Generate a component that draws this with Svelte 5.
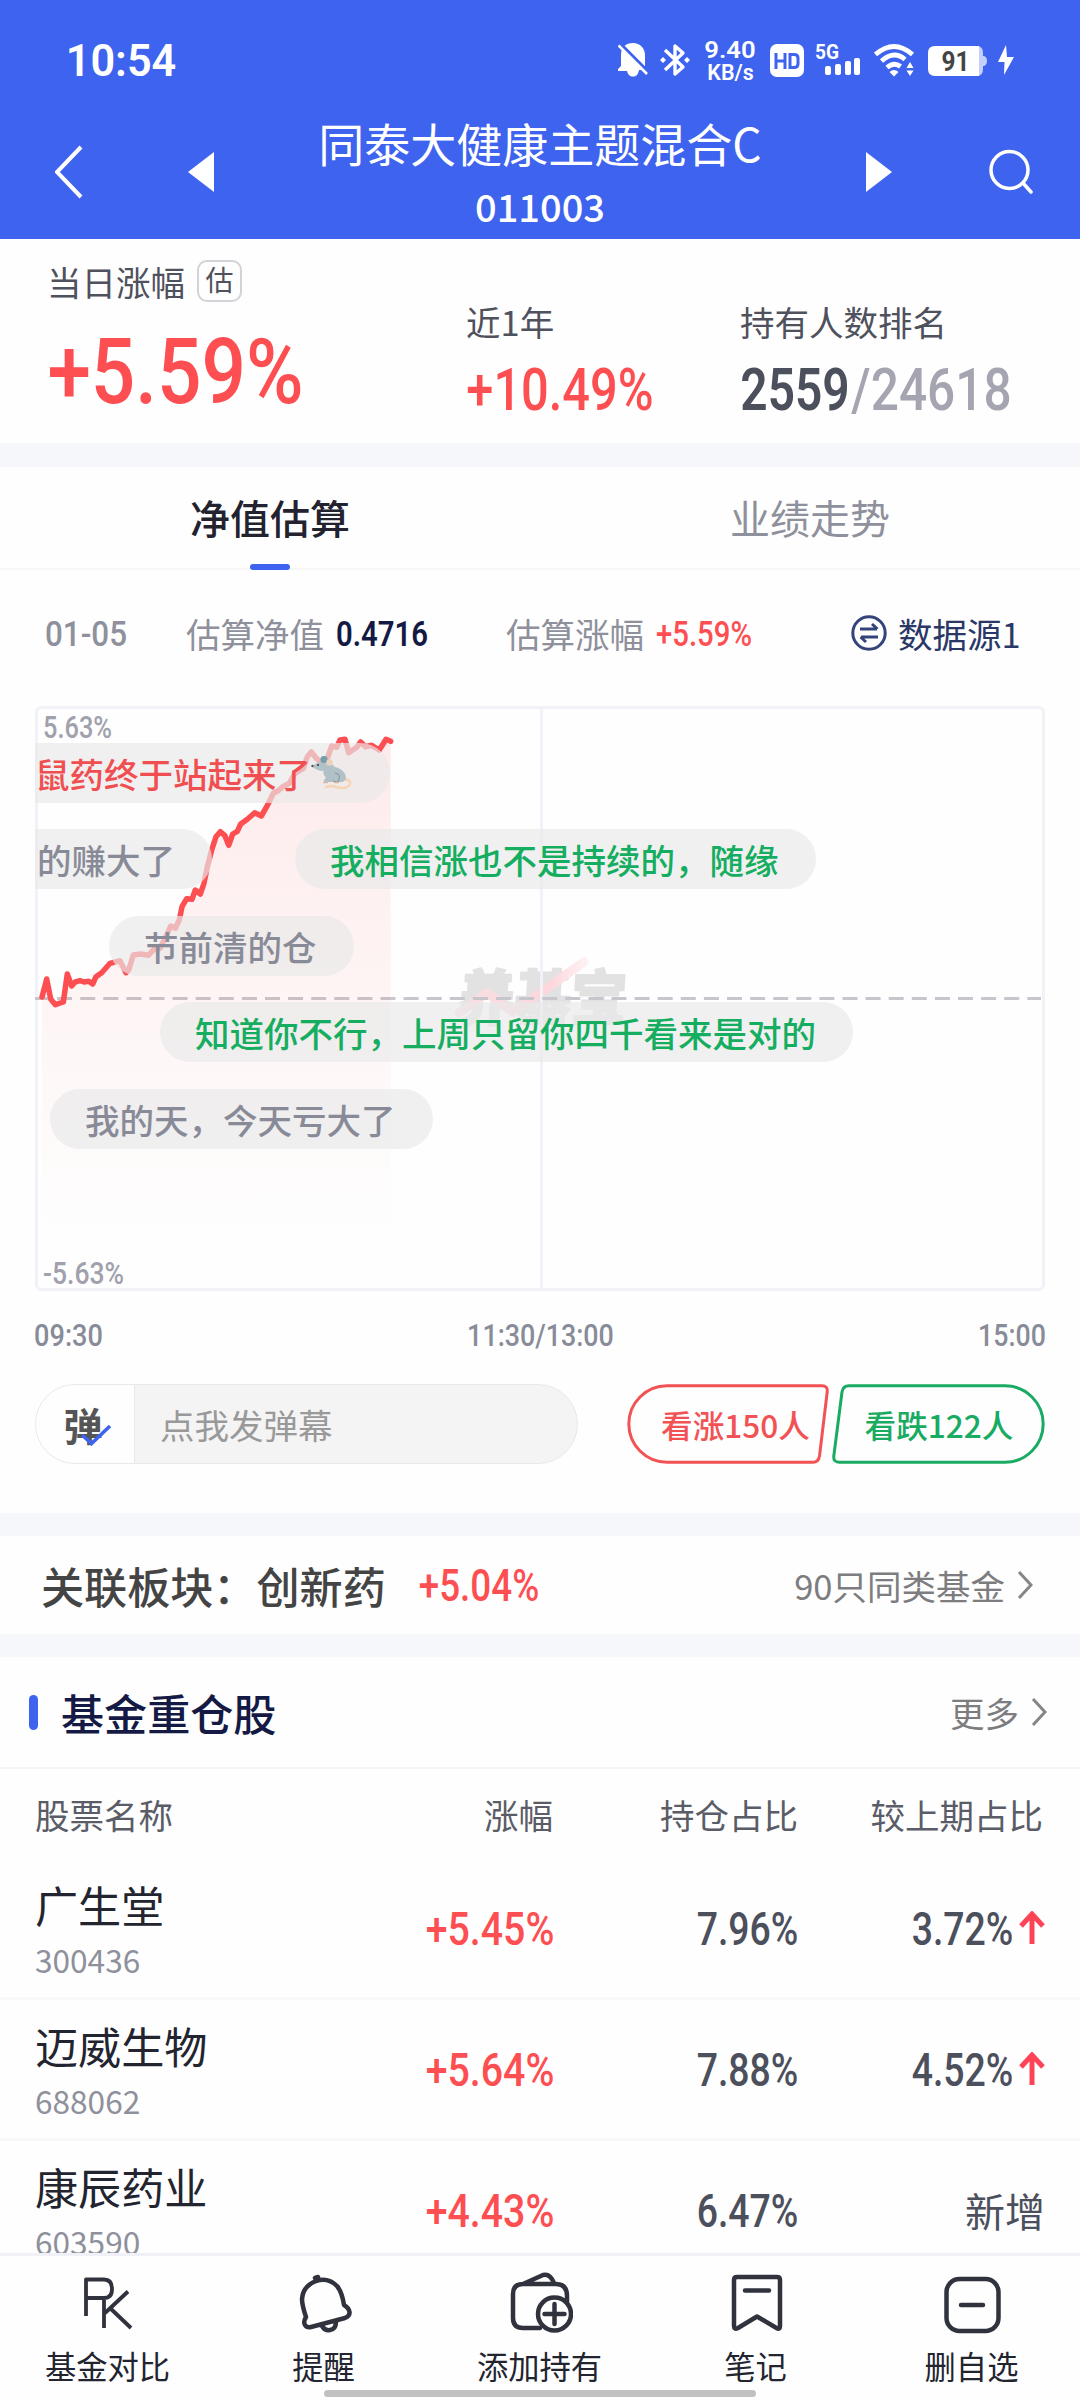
<script lang="ts">
    type Comment = { text: string; tone: 'up' | 'down' | 'flat'; left: number; top: number; mouse?: boolean };

    const comments: Comment[] = [
        { text: '鼠药终于站起来了', tone: 'up', left: -35, top: 37, mouse: true },
        { text: '的赚大了', tone: 'flat', left: -33, top: 123 },
        { text: '我相信涨也不是持续的，随缘', tone: 'down', left: 260, top: 123 },
        { text: '节前清的仓', tone: 'flat', left: 74, top: 210 },
        { text: '知道你不行，上周只留你四千看来是对的', tone: 'down', left: 125, top: 296 },
        { text: '我的天，今天亏大了', tone: 'flat', left: 15, top: 383 },
    ];

    const stocks = [
        { name: '广生堂', code: '300436', change: '+5.45%', share: '7.96%', diff: '3.72%' },
        { name: '迈威生物', code: '688062', change: '+5.64%', share: '7.88%', diff: '4.52%' },
        { name: '康辰药业', code: '603590', change: '+4.43%', share: '6.47%', diff: '' },
    ];

    const line = '7,291 11.7,273 15.7,293 20.3,298.7 28.3,296 32.3,268 36.7,280 40.3,276 45,274.7 49,276 53.7,275.3 57.7,278 61,270.7 66.7,266.7 75,257.3 85,254.7 91,266.7 93.7,264 98.3,249 105.7,248 113.3,249.3 118.3,244 125,242.3 131.7,229 135.7,220 140.3,222.3 144.3,214 147,200.7 151.7,192.7 157,193.3 160.3,184 165.3,188 169,177.3 172.3,160.7 176.7,144 181,130.7 185.3,125.7 189.7,129.3 193.7,139.3 197.7,128 202.3,125.3 205.7,118 212.3,113.3 219.7,106.7 226.3,110 231.7,100.7 238.3,87.3 243.3,84.7 247.7,80.7 254.3,77.3 260,67.3 268.3,62.3 272.3,50.7 276.3,46 281.7,52.7 290,59 296.7,40 301.7,41.3 305,34 310,33.3 313.7,46.7 321.7,41.3 325.7,36 330.3,40.7 336.7,39.3 344.3,44 351,33.3 355.7,35.3';

    let activeTab = $state('estimate');
    let danmakuOn = $state(true);
</script>

<!-- Condensed figures: w is the drawn width, h the height of the digits -->
{#snippet num(text: string, w: number, h: number, weight = 500)}
    <svg class="num" width={w} height={h} viewBox="0 0 {w} {h}">
        <text x={-h * 0.04} y={h} font-size={h / 0.711} font-weight={weight} textLength={w + h * 0.08} lengthAdjust="spacingAndGlyphs">{text}</text>
    </svg>
{/snippet}

{#snippet chevron()}
    <svg class="chevron" width="16" height="28" viewBox="0 0 16 28"><path d="M2 1 14 14 2 27" /></svg>
{/snippet}

<div class="app">
    <header>
        <div class="status">
            <span class="time">{@render num('10:54', 108, 31, 600)}</span>
            <div class="status-icons">
                <svg class="bell" width="30" height="34" viewBox="0 0 30 34">
                    <path fill="#fff" d="M3 12 C3 4 8 0 15 0 C22 0 27 5 27 12 V27 H21 C20 32 18 33.500 15 33.500 C12 33.500 10 32 9 28 H0 V26 L3 23Z" />
                    <path class="slash" d="M1 0 31 30" />
                    <path stroke="#fff" stroke-width="2.600" d="M0.500 2.500 29 31" />
                </svg>
                <svg class="bt" width="30" height="34" viewBox="0 0 30 34" fill="none" stroke="#fff" stroke-width="3.400">
                    <path d="M5 7 23 24 15 31 V3 L23 10 5 27" stroke-linejoin="round" />
                    <path d="M0 17 3 14 6 17 3 20Z M24 17 27 14 30 17 27 20Z" fill="#fff" stroke="none" />
                </svg>
                <div class="speed">
                    {@render num('9.40', 50, 17, 600)}
                    {@render num('KB/s', 45, 16, 600)}
                </div>
                <svg class="hd" width="34" height="33" viewBox="0 0 34 33">
                    <rect width="34" height="33" rx="7" fill="#fff" />
                    <path d="M6 9 V25 M15 9 V25 M6 17 H15 M20 10.500 H24 Q28 10.500 28 14 V20 Q28 23.500 24 23.500 H20Z" fill="none" stroke="#3e63ee" stroke-width="3" />
                </svg>
                <svg class="signal" width="46" height="33" viewBox="0 0 46 33">
                    <text x="0" y="15" font-size="20" font-weight="700" textLength="24" lengthAdjust="spacingAndGlyphs">5G</text>
                    <rect x="10" y="22" width="6" height="9" rx="2" />
                    <rect x="20" y="20" width="6" height="11" rx="2" />
                    <rect x="30" y="17" width="6" height="14" rx="2" />
                    <rect x="39" y="14" width="6" height="17" rx="2" />
                </svg>
                <svg class="wifi" width="41" height="33" viewBox="0 0 41 33">
                    <path d="M1.500 10.500 Q20 -5.500 38.500 10.500 M7.500 17 Q20 6 31 15.500 M13 23.500 Q20 17.500 26.500 22.500" fill="none" stroke="#fff" stroke-width="4.800" />
                    <path fill="#fff" d="M15.500 28 Q20 24 24.500 28 L20 32.500Z M32.500 24 36 18 39.500 24Z M32.500 26.500 H39.500 L36 32Z" />
                </svg>
                <svg class="battery" width="60" height="30" viewBox="0 0 60 30">
                    <path fill="#c5d0fa" d="M46 0 H49 Q55 0 55 7 V10 H56 Q59 11 59 15 Q59 19 56 20 H55 V23 Q55 30 49 30 H46Z" />
                    <path fill="#fff" d="M7 0 H51 V30 H7 Q0 30 0 23 V7 Q0 0 7 0Z" />
                    <text x="13.500" y="25" font-size="27.500" font-weight="700" textLength="28" lengthAdjust="spacingAndGlyphs">91</text>
                </svg>
                <svg class="bolt" width="16" height="30" viewBox="0 0 16 30"><path fill="#fff" d="M8 0 0 17 H6.500 L6 30 16 12 H9Z" /></svg>
            </div>
        </div>
        <nav class="top">
            <svg class="back" width="28" height="54" viewBox="0 0 28 54"><path d="M26 2 2 27 26 52" fill="none" stroke="#fff" stroke-width="4" /></svg>
            <svg class="prev" width="26" height="40" viewBox="0 0 26 40"><path d="M26 0 V40 L0 20Z" fill="#fff" /></svg>
            <div class="fund">
                <h1>同泰大健康主题混合C</h1>
                <p>011003</p>
            </div>
            <svg class="next" width="26" height="40" viewBox="0 0 26 40"><path d="M0 0 V40 L26 20Z" fill="#fff" /></svg>
            <svg class="search" width="44" height="46" viewBox="0 0 44 46" fill="none" stroke="#fff" stroke-width="3.500">
                <circle cx="20.500" cy="21" r="18.500" />
                <path d="M34 34 42 43" stroke-linecap="round" />
            </svg>
        </nav>
    </header>

    <main>
        <section class="summary">
            <div class="today">
                <div class="label">当日涨幅 <span class="badge">估</span></div>
                <span class="up">{@render num('+5.59%', 251, 65, 500)}</span>
            </div>
            <div class="stat year">
                <div class="label">近1年</div>
                <span class="up">{@render num('+10.49%', 184, 42)}</span>
            </div>
            <div class="stat">
                <div class="label">持有人数排名</div>
                <div class="rank">
                    <span class="dark">{@render num('2559', 106, 42, 600)}</span>
                    <span class="soft">{@render num('/24618', 157, 42)}</span>
                </div>
            </div>
        </section>

        <div class="tabs">
            <button class="tab" class:selected={activeTab === 'estimate'} onclick={() => (activeTab = 'estimate')}>净值估算</button>
            <button class="tab" class:selected={activeTab === 'trend'} onclick={() => (activeTab = 'trend')}>业绩走势</button>
        </div>

        <section class="estimate">
            <div class="info">
                <span class="muted">{@render num('01-05', 80, 25)}</span>
                <span class="pair value">估算净值 <span class="navy">{@render num('0.4716', 90, 25, 600)}</span></span>
                <span class="pair">估算涨幅 <span class="up">{@render num('+5.59%', 94, 25)}</span></span>
                <span class="source">
                    <svg width="36" height="36" viewBox="0 0 36 36" fill="none" stroke="#34447a" stroke-width="3">
                        <circle cx="18" cy="18" r="16.200" />
                        <path d="M9 14 H26 M21 9 26.500 14 M27 22 H10 M15 27 9.500 22" />
                    </svg>
                    数据源1
                </span>
            </div>

            <div class="chart">
                <svg width="1010" height="585" viewBox="0 0 1010 585">
                    <defs>
                        <linearGradient id="fade" x1="0" y1="35" x2="0" y2="530" gradientUnits="userSpaceOnUse">
                            <stop offset="0" stop-color="#fd4e52" stop-opacity="0.11" />
                            <stop offset="1" stop-color="#fd4e52" stop-opacity="0" />
                        </linearGradient>
                        <linearGradient id="pink" x1="423" y1="0" x2="555" y2="0" gradientUnits="userSpaceOnUse">
                            <stop offset="0" stop-color="#f9dfe2" />
                            <stop offset="0.7" stop-color="#fcd7dc" />
                            <stop offset="1" stop-color="#fef4f5" />
                        </linearGradient>
                    </defs>
                    <g transform="translate(423 314) skewX(-3)">
                        <text class="watermark" x="0" y="0" textLength="168" lengthAdjust="spacingAndGlyphs">养基宝</text>
                    </g>
                    <path class="swoosh" stroke="url(#pink)" d="M424 307 452 287 478 306 549 256" />
                    <rect class="frame" x="1.500" y="1.500" width="1007" height="582" rx="5" />
                    <path class="frame" d="M506.500 2 V583" />
                    <g class="axis">
                        <text x="8" y="32" textLength="69" lengthAdjust="spacingAndGlyphs">5.63%</text>
                        <text x="8" y="578" textLength="81" lengthAdjust="spacingAndGlyphs">-5.63%</text>
                    </g>
                    <path class="zero" d="M-1 292.500 H1006" />
                    <polygon points="7,585 {line} 355.7,585" fill="url(#fade)" />
                    <polyline class="trend" points={line} />
                </svg>
                <div class="danmaku">
                    {#each comments as c}
                        <div class="pill {c.tone}" style="left: {c.left}px; top: {c.top}px">
                            {c.text}
                            {#if c.mouse}
                                <svg class="mouse" width="42" height="34" viewBox="0 0 42 34">
                                    <path d="M29 24 Q40 22 39 28 Q36 34 25 31 Q20 29 15 31" fill="none" stroke="#f6d5b4" stroke-width="2.500" stroke-linecap="round" />
                                    <path d="M1 10 Q9 4 17 5 Q21 8 24 11 C31 13 35 17 35 22 Q34 27 27 26 L14 26 Q11 25 15 22 Q11 18 13 15 Q5 15 1 10Z" fill="#b2c0c8" />
                                    <path d="M24 17 Q31 18 27 26 L22 25" fill="none" stroke="#8195a0" />
                                    <circle cx="13" cy="3.500" r="3.600" fill="#769fac" />
                                    <circle cx="18.500" cy="6.500" r="3.200" fill="#ead3bd" />
                                    <circle cx="7" cy="9" r="1" fill="#333" />
                                    <circle cx="1.500" cy="10" r="1.200" fill="#555" />
                                    <path d="M12 26.500 H17 M23 26.500 H28" stroke="#dfb99d" stroke-width="1.500" />
                                </svg>
                            {/if}
                        </div>
                    {/each}
                </div>
            </div>

            <div class="times">
                {@render num('09:30', 67, 22)}
                {@render num('11:30/13:00', 145, 22)}
                {@render num('15:00', 66, 22)}
            </div>

            <div class="actions">
                <div class="composer">
                    <button class="toggle" onclick={() => (danmakuOn = !danmakuOn)}>
                        弹
                        {#if danmakuOn}
                            <svg width="32" height="22" viewBox="0 0 32 22"><path d="M2 11 11.500 19.500 30 2" /></svg>
                        {/if}
                    </button>
                    <span class="placeholder">点我发弹幕</span>
                </div>
                <button class="vote bull">
                    <svg width="202" height="80" viewBox="0 0 202 80"><path d="M40 1.800 H195 Q201 1.800 200.200 8 L192.500 72 Q191.500 78.200 186 78.200 H40 A38.200 38.200 0 0 1 40 1.800Z" /></svg>
                    看涨150人
                </button>
                <button class="vote bear">
                    <svg width="213" height="80" viewBox="0 0 213 80"><path d="M173 1.800 H17 Q11 1.800 10 8 L1.800 72 Q1.200 78.200 7 78.200 H173 A38.200 38.200 0 0 0 173 1.800Z" /></svg>
                    看跌122人
                </button>
            </div>
        </section>

        <section class="sector">
            <strong>关联板块：创新药</strong>
            <span class="up">{@render num('+5.04%', 118, 31)}</span>
            <span class="more">90只同类基金 {@render chevron()}</span>
        </section>

        <section class="holdings">
            <div class="heading">
                <i></i>
                <h2>基金重仓股</h2>
                <span class="more">更多 {@render chevron()}</span>
            </div>
            <div class="row head">
                <span>股票名称</span>
                <span>涨幅</span>
                <span>持仓占比</span>
                <span>较上期占比</span>
            </div>
            {#each stocks as s}
                <div class="row">
                    <div class="stock">
                        <b>{s.name}</b>
                        <small>{s.code}</small>
                    </div>
                    <span class="up">{@render num(s.change, 126, 33)}</span>
                    <span class="dark">{@render num(s.share, 99, 33)}</span>
                    <span class="dark diff">
                        {#if s.diff}
                            {@render num(s.diff, 99, 33)}
                            <svg class="arrow" width="26" height="34" viewBox="0 0 26 34"><path d="M13 33 V3 M2 15 13 3 24 15" /></svg>
                        {:else}
                            新增
                        {/if}
                    </span>
                </div>
            {/each}
        </section>
    </main>

    <footer>
        <div class="item">
            <svg width="60" height="62" viewBox="0 0 60 62">
                <path d="M8 44 V7.500 H26 Q34 7.500 34 17 Q34 26 26 26 H9 M26 27 V56 M50 19.500 27 41 M32 36 53 56" class="thin" />
            </svg>
            基金对比
        </div>
        <div class="item">
            <svg width="60" height="62" viewBox="0 0 60 62">
                <path d="M22 9 Q9 14 8 27 Q8 33 12 45 Q9 50 11 53 Q13 56 17 55 L51 46 Q56 44 55.500 40 Q55 36 50 33 Q48 20 43 14 Q34 5 22 9Z M22 8 21 6 24 5 M28 54 Q31 59 36 58 Q42 57 42 50" />
            </svg>
            提醒
        </div>
        <div class="item">
            <svg width="66" height="62" viewBox="0 0 66 62">
                <path d="M33 56 H16 Q6 56 6 46 V22 Q6 12 16 12 H49 Q60 12 60 24 V30 M16 12 36 3 Q43 1 47 11" />
                <circle cx="47.500" cy="42" r="16.500" />
                <path d="M47.500 32 V52 M37.500 42 H57.500" />
            </svg>
            添加持有
        </div>
        <div class="item">
            <svg width="60" height="62" viewBox="0 0 60 62">
                <path d="M11 5 H51 Q54 5 54 8 V54 Q54 58 50.500 56 L31 44.500 12 56 Q8 58 8 54 V8 Q8 5 11 5Z M19 18.500 H43" />
            </svg>
            笔记
        </div>
        <div class="item">
            <svg width="60" height="62" viewBox="0 0 60 62">
                <rect x="4.500" y="7" width="52" height="52" rx="13" />
                <path d="M19 33 H41" />
            </svg>
            删自选
        </div>
        <div class="home"></div>
    </footer>
</div>

<style>
    :global(body) {
        margin: 0;
        background: #fff;
    }

    .app {
        display: flex;
        flex-direction: column;
        width: 1080px;
        height: 2400px;
        overflow: hidden;
        background: #fefefe;
        color: #4f515d;
        font-family: "Noto Sans CJK SC", sans-serif;
        font-size: 34.5px;
        white-space: nowrap;
    }

    svg {
        display: block;
        flex-shrink: 0;
    }

    button {
        padding: 0;
        border: none;
        background: none;
        font: inherit;
        color: inherit;
        cursor: pointer;
    }

    h1, h2, p {
        margin: 0;
    }

    .num {
        overflow: visible;
        fill: currentColor;
        font-family: Roboto, "Liberation Sans", sans-serif;
    }

    .up { color: #fd4e52; }
    .dark { color: #4c4f5c; }
    .soft { color: #a4a5b0; }
    .muted { color: #8e909c; }
    .navy { color: #141a44; }

    /* Header */
    header {
        flex: none;
        height: 239px;
        background: #3e63ee;
        color: #fff;
    }

    .status {
        display: flex;
        align-items: center;
        justify-content: space-between;
        box-sizing: border-box;
        height: 112px;
        padding: 8px 66px 0 67px;
    }

    .status-icons {
        display: flex;
        align-items: center;
    }

    .slash {
        stroke: #3e63ee;
        stroke-width: 4px;
    }

    .bt { margin-left: 12px; }

    .speed {
        display: flex;
        flex-direction: column;
        align-items: center;
        gap: 6px;
        margin-left: 15px;
    }

    .hd { margin-left: 15px; }

    .signal {
        margin-left: 11px;
        fill: #fff;
        font-family: Roboto, sans-serif;
    }

    .wifi { margin-left: 13px; }

    .battery {
        margin: 2px 0 0 13px;
        fill: #444;
        font-family: Roboto, sans-serif;
    }

    .bolt { margin-left: 10px; }

    .top {
        display: flex;
        align-items: center;
        height: 119px;
        padding: 0 47px 0 55px;
    }

    .prev { margin-left: 105px; }

    .fund {
        flex: 1;
        height: 119px;
        text-align: center;
    }

    .fund h1 {
        font-size: 46px;
        font-weight: 400;
        line-height: 60px;
    }

    .fund p {
        padding-top: 3px;
        font-size: 38px;
        font-weight: 500;
        line-height: 62px;
    }

    .next { margin-right: 97px; }

    /* Summary */
    .summary {
        display: grid;
        grid-template-columns: 418px 275px 1fr;
        box-sizing: border-box;
        height: 228px;
        padding: 21px 0 0 49px;
        border-bottom: 24px solid #f6f7fb;
    }

    .label {
        display: flex;
        align-items: center;
        height: 42px;
        margin-left: -2px;
        line-height: 42px;
    }

    .badge {
        box-sizing: border-box;
        width: 45px;
        height: 42px;
        margin-left: 12px;
        border: 2.5px solid #d2d3d8;
        border-radius: 10px;
        font-size: 28px;
        line-height: 35px;
        text-align: center;
    }

    .today .num { margin: 36px 0 0 1px; }
    .stat { padding-top: 40px; }
    .stat .num { margin-top: 26px; }
    .year .num { margin-left: 1px; }
    .year .label { margin-left: -1px; }

    .rank {
        display: flex;
        gap: 5px;
    }

    /* Tabs */
    .tabs {
        display: flex;
        box-sizing: border-box;
        height: 103px;
        border-bottom: 2px solid #f6f6f8;
    }

    .tab {
        position: relative;
        flex: 1;
        padding-bottom: 1px;
        font-size: 40px;
        color: #8e909c;
    }

    .tab.selected {
        font-weight: 500;
        color: #22232f;
    }

    .tab.selected::after {
        content: "";
        position: absolute;
        left: 250px;
        bottom: -2px;
        width: 40px;
        height: 6px;
        border-radius: 3px;
        background: #3e63ee;
    }

    /* Estimate */
    .estimate {
        height: 943px;
        border-bottom: 23px solid #f6f7fb;
    }

    .info {
        display: flex;
        align-items: center;
        box-sizing: border-box;
        height: 136px;
        padding: 0 0 10px 46px;
        color: #8e909c;
    }

    .pair {
        display: flex;
        align-items: center;
        gap: 13px;
        margin-left: 79px;
    }

    .pair.value { margin-left: 60px; }

    .source {
        display: flex;
        align-items: center;
        gap: 11px;
        margin-left: 100px;
        color: #2a3867;
    }

    .chart {
        position: relative;
        width: 1010px;
        height: 585px;
        margin: 0 35px;
    }

    .frame {
        fill: none;
        stroke: #f1f1f7;
        stroke-width: 3px;
    }

    .axis {
        fill: #a0a1ac;
        font: 500 31px Roboto, sans-serif;
    }

    .watermark {
        fill: #e2e2e3;
        stroke: #e2e2e3;
        stroke-width: 2px;
        stroke-linejoin: round;
        font-size: 60px;
        font-weight: 900;
    }

    .swoosh {
        fill: none;
        stroke-width: 9px;
        stroke-linejoin: round;
        stroke-linecap: round;
    }

    .zero {
        stroke: #c7c6cc;
        stroke-width: 3px;
        stroke-dasharray: 15 8.1;
    }

    .trend {
        fill: none;
        stroke: #fd4e52;
        stroke-width: 5.5px;
        stroke-linejoin: round;
        stroke-linecap: round;
    }

    .danmaku {
        position: absolute;
        inset: 0;
        overflow: hidden;
    }

    .pill {
        position: absolute;
        display: flex;
        align-items: center;
        height: 60px;
        padding: 0 37px 0 35px;
        border-radius: 30px;
        background: rgba(233, 233, 233, 0.68);
        font-weight: 500;
        line-height: 60px;
    }

    .pill.up { color: #f04f52; }
    .pill.down { color: #15ad60; }
    .pill.flat { color: #888b97; }

    .times {
        display: flex;
        justify-content: space-between;
        height: 60px;
        padding: 33px 35px 0;
        color: #888b98;
    }

    .actions {
        display: flex;
        padding: 0 35px;
    }

    .composer {
        display: flex;
        box-sizing: border-box;
        width: 543px;
        height: 80px;
        overflow: hidden;
        border: 1.5px solid #e9e9e9;
        border-radius: 40px;
        background: #f4f4f4;
        line-height: 76px;
    }

    .toggle {
        position: relative;
        width: 99px;
        padding-right: 4px;
        border-right: 1px solid #e9e9e9;
        background: #fefefe;
        font-size: 39px;
        font-weight: 700;
        line-height: 70px;
        color: #555;
    }

    .toggle svg {
        position: absolute;
        left: 44px;
        top: 39px;
        fill: none;
        stroke: #3e63ee;
        stroke-width: 3.5px;
    }

    .placeholder {
        padding-left: 25px;
        line-height: 78px;
        color: #999;
    }

    .vote {
        position: relative;
        width: 202px;
        height: 80px;
        margin-left: 49px;
        padding-left: 15px;
        font-size: 31.6px;
        font-weight: 500;
        color: #f25254;
    }

    .vote.bear {
        width: 213px;
        margin-left: 3px;
        padding-left: 1px;
        color: #19ab62;
    }

    .vote svg {
        position: absolute;
        inset: 0;
        fill: none;
        stroke: currentColor;
        stroke-width: 3px;
    }

    /* Related sector */
    .sector {
        display: flex;
        align-items: center;
        height: 98px;
        padding: 0 47px 0 41px;
        border-bottom: 23px solid #f6f7fb;
    }

    .sector strong {
        margin-right: 34px;
        font-size: 43.1px;
        font-weight: 500;
        line-height: 60px;
        color: #444;
    }

    .more {
        display: flex;
        align-items: center;
        gap: 12px;
        margin-left: auto;
        color: #7d7d80;
    }

    .chevron {
        fill: none;
        stroke: #85858a;
        stroke-width: 3px;
    }

    /* Holdings */
    .heading {
        display: flex;
        align-items: center;
        box-sizing: border-box;
        height: 112px;
        padding: 0 33px 0 29px;
        border-bottom: 2px solid #f6f6f8;
    }

    .heading i {
        width: 9px;
        height: 35px;
        border-radius: 5px;
        background: #3e63ee;
    }

    .heading h2 {
        margin-left: 23px;
        font-size: 43.1px;
        font-weight: 500;
        line-height: 60px;
        color: #141a44;
    }

    .row {
        display: grid;
        grid-template-columns: 268px 250px 244px 248px;
        align-items: center;
        justify-items: end;
        box-sizing: border-box;
        height: 141px;
        padding: 0 35px;
        border-bottom: 3px solid #f8f8fa;
    }

    .row.head {
        grid-template-columns: 268px 250px 245px 245px;
        height: 90px;
        border: none;
        color: #5a5c67;
    }

    .row > :first-child {
        justify-self: start;
    }

    .stock {
        display: flex;
        flex-direction: column;
    }

    .stock b {
        font-size: 43.1px;
        font-weight: 400;
        line-height: 62px;
        color: #22242f;
    }

    .stock small {
        font-size: 31.6px;
        line-height: 48px;
        color: #8e909c;
    }

    .diff {
        display: flex;
        align-items: center;
        gap: 7px;
        font-size: 40px;
    }

    .arrow {
        fill: none;
        stroke: #fd4457;
        stroke-width: 5px;
    }

    /* Bottom bar */
    main {
        flex: 1;
        min-height: 0;
        overflow: hidden;
    }

    footer {
        position: relative;
        flex: none;
        display: grid;
        grid-template-columns: repeat(5, 216px);
        box-sizing: border-box;
        height: 147px;
        border-top: 3px solid #f0f1f6;
        background: #fefefe;
    }

    .item {
        display: flex;
        flex-direction: column;
        align-items: center;
        padding: 16px 1px 0 0;
        font-size: 31.3px;
        line-height: 63px;
        color: #22242f;
    }

    .item svg {
        fill: none;
        stroke: #30333d;
        stroke-width: 4.5px;
        stroke-linejoin: round;
        stroke-linecap: round;
    }

    .item .thin {
        stroke-width: 3.8px;
        stroke-linecap: butt;
    }

    .home {
        position: absolute;
        left: 324px;
        bottom: 3px;
        width: 432px;
        height: 7px;
        border-radius: 4px;
        background: #c1c1c1;
    }
</style>
